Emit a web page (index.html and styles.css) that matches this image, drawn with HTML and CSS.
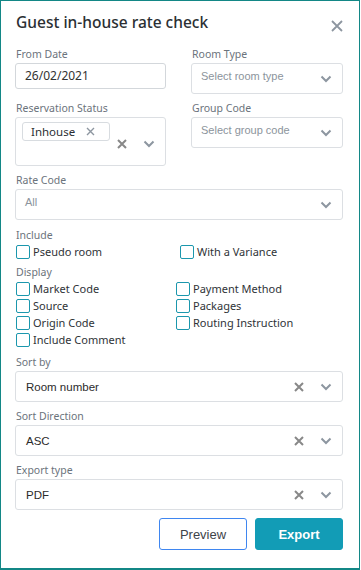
FILE: index.html
```html
<!DOCTYPE html>
<html>
<head>
<meta charset="utf-8">
<link rel="stylesheet" href="styles.css">
</head>
<body>
<div class="modal">
  <div class="header">
    <h1 class="title">Guest in-house rate check</h1>
    <svg class="close" width="12" height="12" viewBox="0 0 12 12"><path d="M1 1 L11 11 M11 1 L1 11" stroke="#8d96a0" stroke-width="1.8" fill="none"/></svg>
  </div>

  <div class="grid2">
    <div class="field">
      <div class="label">From Date</div>
      <div class="input date">26/02/2021</div>
    </div>
    <div class="field">
      <div class="label">Room Type</div>
      <div class="select">
        <span class="placeholder">Select room type</span>
        <svg class="chev" width="12" height="8" viewBox="0 0 12 8"><path d="M1.5 1.5 L6 6 L10.5 1.5" stroke="#8d96a0" stroke-width="2" fill="none"/></svg>
      </div>
    </div>
  </div>

  <div class="grid2 gap-top">
    <div class="field">
      <div class="label">Reservation Status</div>
      <div class="multi">
        <div class="tag">Inhouse
          <svg class="tagx" width="9" height="9" viewBox="0 0 9 9"><path d="M1 1 L8 8 M8 1 L1 8" stroke="#8d96a0" stroke-width="1.4" fill="none"/></svg>
        </div>
        <div class="multi-icons">
          <svg class="clr" width="10" height="10" viewBox="0 0 10 10"><path d="M1 1 L9 9 M9 1 L1 9" stroke="#888" stroke-width="2" fill="none"/></svg>
          <svg class="chev" width="12" height="8" viewBox="0 0 12 8"><path d="M1.5 1.5 L6 6 L10.5 1.5" stroke="#8d96a0" stroke-width="2" fill="none"/></svg>
        </div>
      </div>
    </div>
    <div class="field">
      <div class="label">Group Code</div>
      <div class="select">
        <span class="placeholder">Select group code</span>
        <svg class="chev" width="12" height="8" viewBox="0 0 12 8"><path d="M1.5 1.5 L6 6 L10.5 1.5" stroke="#8d96a0" stroke-width="2" fill="none"/></svg>
      </div>
    </div>
  </div>

  <div class="field gap-top">
    <div class="label">Rate Code</div>
    <div class="select">
      <span class="placeholder">All</span>
      <svg class="chev" width="12" height="8" viewBox="0 0 12 8"><path d="M1.5 1.5 L6 6 L10.5 1.5" stroke="#8d96a0" stroke-width="2" fill="none"/></svg>
    </div>
  </div>

  <div class="section-label include-label">Include</div>
  <div class="checks include">
    <label class="check"><span class="box"></span>Pseudo room</label>
    <label class="check"><span class="box"></span>With a Variance</label>
  </div>

  <div class="section-label display-label">Display</div>
  <div class="checks display">
    <label class="check"><span class="box"></span>Market Code</label>
    <label class="check"><span class="box"></span>Payment Method</label>
    <label class="check"><span class="box"></span>Source</label>
    <label class="check"><span class="box"></span>Packages</label>
    <label class="check"><span class="box"></span>Origin Code</label>
    <label class="check"><span class="box"></span>Routing Instruction</label>
    <label class="check"><span class="box"></span>Include Comment</label>
  </div>

  <div class="field gap-top">
    <div class="label">Sort by</div>
    <div class="select filled">
      <span class="value">Room number</span>
      <svg class="clr" width="10" height="10" viewBox="0 0 10 10"><path d="M1 1 L9 9 M9 1 L1 9" stroke="#888" stroke-width="2" fill="none"/></svg>
      <svg class="chev" width="12" height="8" viewBox="0 0 12 8"><path d="M1.5 1.5 L6 6 L10.5 1.5" stroke="#8d96a0" stroke-width="2" fill="none"/></svg>
    </div>
  </div>

  <div class="field gap-top">
    <div class="label">Sort Direction</div>
    <div class="select filled">
      <span class="value">ASC</span>
      <svg class="clr" width="10" height="10" viewBox="0 0 10 10"><path d="M1 1 L9 9 M9 1 L1 9" stroke="#888" stroke-width="2" fill="none"/></svg>
      <svg class="chev" width="12" height="8" viewBox="0 0 12 8"><path d="M1.5 1.5 L6 6 L10.5 1.5" stroke="#8d96a0" stroke-width="2" fill="none"/></svg>
    </div>
  </div>

  <div class="field gap-top">
    <div class="label">Export type</div>
    <div class="select filled">
      <span class="value">PDF</span>
      <svg class="clr" width="10" height="10" viewBox="0 0 10 10"><path d="M1 1 L9 9 M9 1 L1 9" stroke="#888" stroke-width="2" fill="none"/></svg>
      <svg class="chev" width="12" height="8" viewBox="0 0 12 8"><path d="M1.5 1.5 L6 6 L10.5 1.5" stroke="#8d96a0" stroke-width="2" fill="none"/></svg>
    </div>
  </div>

  <div class="actions">
    <button class="btn preview">Preview</button>
    <button class="btn export">Export</button>
  </div>
</div>
</body>
</html>
```
FILE: styles.css
```css
* { box-sizing: border-box; }
html, body { margin: 0; padding: 0; background: #fff; }
body { font-family: "Noto Sans", "Liberation Sans", sans-serif; color: #2f3337; }

.modal {
  width: 360px;
  height: 570px;
  border: 1px solid #138786;
  border-bottom-width: 2px;
  padding: 11px 16px 0 14px;
}

.header {
  display: flex;
  justify-content: space-between;
  align-items: flex-start;
  height: 20px;
  margin-bottom: 15px;
}
.title {
  margin: 0;
  font-size: 15.5px;
  line-height: 20px;
  font-weight: 500;
  color: #2b2f33;
  padding-left: 1px;
}
.close { margin-top: 8px; margin-right: 0; }

.grid2 {
  display: grid;
  grid-template-columns: 151px 152px;
  column-gap: 25px;
  align-items: start;
}
.gap-top { margin-top: 7px; }

.label, .section-label {
  font-size: 10.5px;
  line-height: 14px;
  color: #6b737c;
  margin-bottom: 2px;
  padding-left: 1px;
}
.section-label { margin-bottom: 1px; }
.include-label { margin-top: 8px; }
.display-label { margin-top: 5px; }

.input {
  height: 26px;
  border: 1px solid #d3d7db;
  border-radius: 3px;
  font-size: 12px;
  line-height: 24px;
  padding-left: 9px;
  color: #333;
}

.select {
  height: 31px;
  border: 1px solid #dcdfe3;
  border-radius: 3px;
  display: flex;
  align-items: center;
  padding: 0 10px 0 9px;
}
.select .placeholder {
  flex: 1;
  font-family: "Liberation Sans", Arial, sans-serif;
  font-size: 11px;
  color: #8c949c;
  margin-bottom: 6px;
}
.select .value {
  flex: 1;
  font-family: "Liberation Sans", Arial, sans-serif;
  font-size: 11.5px;
  color: #2b2b2b;
  padding-left: 1px;
}
.select .clr { margin-right: 16px; }
.select .chev { margin-top: 1px; }

.multi {
  height: 49px;
  border: 1px solid #dcdfe3;
  border-radius: 3px;
  display: flex;
  align-items: flex-start;
  padding: 4px 10px 0 6px;
}
.tag {
  width: 88px;
  height: 19px;
  border: 1px solid #d8dce0;
  border-radius: 3px;
  font-size: 11.5px;
  line-height: 17px;
  padding-left: 8px;
  color: #2b2f33;
  display: flex;
  align-items: center;
  justify-content: space-between;
  padding-right: 14px;
}
.multi-icons {
  display: flex;
  align-items: center;
  margin-top: 16px;
  margin-left: auto;
  gap: 16px;
}
.multi-icons .clr { margin-top: 1px; }

.checks {
  display: grid;
  font-size: 11px;
  color: #2f3337;
}
.include { grid-template-columns: 164px 1fr; }
.display { grid-template-columns: 160px 1fr; }
.check {
  display: flex;
  align-items: center;
  height: 17px;
  gap: 3px;
  white-space: nowrap;
}
.check .box {
  width: 14px;
  height: 14px;
  border: 1.5px solid #1b97ad;
  border-radius: 2px;
  flex: none;
  margin-left: 1px;
}

.actions {
  display: flex;
  justify-content: flex-end;
  gap: 8px;
  margin-top: 8px;
  padding-right: 0;
}
.btn {
  width: 88px;
  height: 32px;
  border-radius: 3px;
  font-family: "Liberation Sans", Arial, sans-serif;
  font-size: 13px;
  cursor: pointer;
}
.preview {
  background: #fff;
  border: 1px solid #3f86f0;
  color: #3e4348;
}
.export {
  background: #129cb6;
  border: 1px solid #129cb6;
  color: #fff;
  font-weight: bold;
}
```
